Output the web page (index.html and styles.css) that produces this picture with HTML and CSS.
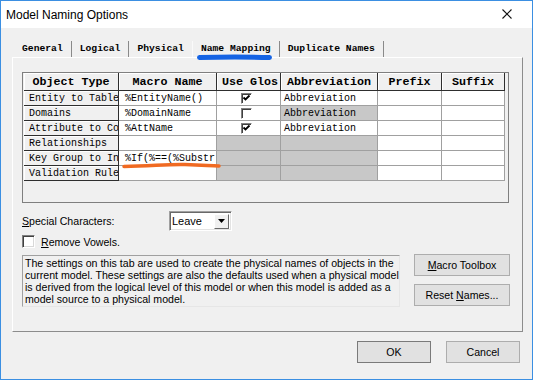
FILE: index.html
```html
<!DOCTYPE html>
<html lang="en">
<head>
    <meta charset="UTF-8">
    <meta name="viewport" content="width=device-width, initial-scale=1.0">
    <title>Model Naming Options</title>
    <link rel="stylesheet" href="styles.css">
</head>
<body>
    <div class="window">
        <div class="titlebar">
            <span class="title">Model Naming Options</span>
            <svg class="close" width="10" height="10" viewBox="0 0 10 10">
                <path d="M0.5 0.5L9.5 9.5M9.5 0.5L0.5 9.5" stroke="#111" stroke-width="1.1" fill="none"/>
            </svg>
        </div>

        <div class="client">
            <div class="tabs">
                <div class="tab">General</div>
                <div class="tab">Logical</div>
                <div class="tab prev">Physical</div>
                <div class="tab active">Name Mapping</div>
                <div class="tab">Duplicate Names</div>
            </div>

            <div class="panel">
                <div class="grid-frame">
                    <table class="grid">
                        <colgroup>
                            <col class="c-type">
                            <col class="c-macro">
                            <col class="c-glos">
                            <col class="c-abbr">
                            <col class="c-prefix">
                            <col class="c-suffix">
                        </colgroup>
                        <tr class="head">
                            <th>Object Type</th>
                            <th>Macro Name</th>
                            <th class="left">Use Glos</th>
                            <th>Abbreviation</th>
                            <th>Prefix</th>
                            <th>Suffix</th>
                        </tr>
                        <tr>
                            <th>Entity to Table</th>
                            <td class="macro">%EntityName()</td>
                            <td class="glos"><span class="cb"><svg width="9" height="9" viewBox="0 0 9 9"><polyline points="1.5,3.5 3.5,5.5 7.5,1.5" fill="none" stroke="#000" stroke-width="1.8"/></svg></span></td>
                            <td class="abbr">Abbreviation</td>
                            <td></td>
                            <td></td>
                        </tr>
                        <tr>
                            <th>Domains</th>
                            <td class="macro">%DomainName</td>
                            <td class="glos"><span class="cb"></span></td>
                            <td class="abbr off">Abbreviation</td>
                            <td></td>
                            <td></td>
                        </tr>
                        <tr>
                            <th>Attribute to Co</th>
                            <td class="macro">%AttName</td>
                            <td class="glos"><span class="cb"><svg width="9" height="9" viewBox="0 0 9 9"><polyline points="1.5,3.5 3.5,5.5 7.5,1.5" fill="none" stroke="#000" stroke-width="1.8"/></svg></span></td>
                            <td class="abbr">Abbreviation</td>
                            <td></td>
                            <td></td>
                        </tr>
                        <tr>
                            <th>Relationships</th>
                            <td class="macro"></td>
                            <td class="off"></td>
                            <td class="off"></td>
                            <td></td>
                            <td></td>
                        </tr>
                        <tr>
                            <th>Key Group to In</th>
                            <td class="macro">%If(%==(%Substr</td>
                            <td class="off"></td>
                            <td class="off"></td>
                            <td></td>
                            <td></td>
                        </tr>
                        <tr>
                            <th>Validation Rule</th>
                            <td class="macro"></td>
                            <td class="off"></td>
                            <td class="off"></td>
                            <td></td>
                            <td></td>
                        </tr>
                    </table>
                </div>

                <div class="special">
                    <label><u>S</u>pecial Characters:</label>
                    <div class="combo">
                        <span>Leave</span>
                        <span class="drop"><svg width="7" height="4" viewBox="0 0 7 4"><polygon points="0,0 7,0 3.5,4" fill="#000"/></svg></span>
                    </div>
                </div>

                <div class="vowels">
                    <span class="box"></span>
                    <span><u>R</u>emove Vowels.</span>
                </div>

                <div class="lower">
                    <div class="desc">
                        The settings on this tab are used to create the physical names of objects in the<br>
                        current model. These settings are also the defaults used when a physical model<br>
                        is derived from the logical level of this model or when this model is added as a<br>
                        model source to a physical model.
                    </div>
                    <div class="side">
                        <button class="btn"><u>M</u>acro Toolbox</button>
                        <button class="btn">Reset <u>N</u>ames...</button>
                    </div>
                </div>
            </div>

            <div class="footer">
                <button class="btn ok">OK</button>
                <button class="btn">Cancel</button>
            </div>
        </div>

        <!-- hand-drawn highlight strokes over the screenshot -->
        <svg class="marks" width="533" height="380" viewBox="0 0 533 380">
            <path d="M199.5 57.5 Q235 56.5 269.5 57.5" stroke="#1463e4" stroke-width="5" stroke-linecap="round" fill="none"/>
            <path d="M124 166.5 C150 166.5 165 164 185 164.5 S210 166 219 166" stroke="#f06a22" stroke-width="3.5" stroke-linecap="round" fill="none"/>
        </svg>
    </div>
</body>
</html>
```

FILE: styles.css
```css
body {
    margin: 0;
    background: #fff;
    font-family: "Liberation Sans", Arial, sans-serif;
    font-size: 10.6px;
    color: #000;
}

.window {
    position: relative;
    width: 533px;
    height: 380px;
    box-sizing: border-box;
    border: 1px solid #3b8fe2;
    background: #f0f0f0;
}

.titlebar {
    height: 27px;
    background: #fff;
    display: flex;
    align-items: center;
    justify-content: space-between;
    padding: 0 20px 0 5px;
}

.title {
    font-size: 12px;
}

.close {
    margin-top: -1px;
}

.client {
    padding-left: 11px;
}

.tabs {
    display: flex;
    height: 16px;
    margin: 13px 0 0 2px;
    font-family: "Liberation Mono", monospace;
    font-size: 9.7px;
    font-weight: bold;
}

.tab {
    padding: 0 8px;
    line-height: 16px;
    border-right: 1px solid #8a8a8a;
}

.tab.prev {
    border-right-color: #fafafa;
}

.panel {
    width: 511px;
    height: 275px;
    box-sizing: border-box;
    border: 1px solid;
    border-color: #fff #8c8c8c #8c8c8c #fff;
    padding: 14px 0 0 9px;
}

.grid-frame {
    width: 487px;
    height: 131px;
    box-sizing: border-box;
    border: 1px solid #7f7f7f;
    padding-left: 1px;
}

.grid {
    border-collapse: separate;
    border-spacing: 0;
    table-layout: fixed;
    width: 481px;
    font-family: "Liberation Mono", monospace;
    font-size: 10px;
}

.c-type { width: 95px; }
.c-macro { width: 98px; }
.c-glos { width: 64px; }
.c-abbr { width: 97px; }
.c-prefix { width: 64px; }
.c-suffix { width: 63px; }

.grid tr {
    height: 15px;
}

.grid tr.head {
    height: 18px;
}

.grid th,
.grid td {
    padding: 0;
    white-space: nowrap;
    overflow: hidden;
    vertical-align: middle;
}

.grid th {
    background: #f0f0f0;
    border-right: 1px solid #2e2e2e;
    border-bottom: 1px solid #2e2e2e;
    box-shadow: inset 1px 1px 0 #fff;
    font-weight: normal;
    text-align: left;
    padding-left: 5px;
}

.grid .head th {
    font-size: 11.7px;
    font-weight: bold;
    text-align: center;
    padding: 0 3px;
}

.grid .head th.left {
    text-align: left;
    padding-left: 5px;
}

.grid td {
    background: #fff;
    border-right: 1px solid #a0a0a0;
    border-bottom: 1px solid #a0a0a0;
}

.grid td.macro {
    padding-left: 6px;
}

.grid td.abbr {
    padding-left: 3px;
}

.grid td.glos {
    padding-left: 24px;
}

.grid td.off {
    background: #c8c8c8;
}

.cb {
    display: block;
    width: 11px;
    height: 11px;
    box-sizing: border-box;
    border: 1px solid;
    border-color: #808080 #fff #fff #808080;
    box-shadow: inset 1px 1px 0 #404040;
    background: #fff;
}

.cb svg {
    display: block;
}

.special {
    display: flex;
    align-items: center;
    height: 20px;
    margin-top: 8px;
}

.special label {
    width: 147px;
}

.combo {
    width: 63px;
    height: 20px;
    box-sizing: border-box;
    border: 1px solid;
    border-color: #a0a0a0 #fff #fff #a0a0a0;
    box-shadow: inset 1px 1px 0 #696969, inset -1px -1px 0 #e3e3e3;
    background: #fff;
    display: flex;
    align-items: center;
    justify-content: space-between;
    padding: 0 2px;
    font-size: 11px;
}

.drop {
    width: 15px;
    height: 15px;
    box-sizing: border-box;
    background: #f0f0f0;
    border: 1px solid;
    border-color: #fff #696969 #696969 #fff;
    display: flex;
    align-items: center;
    justify-content: center;
}

.vowels {
    display: flex;
    align-items: center;
    gap: 6px;
    height: 13px;
    margin-top: 4px;
}

.box {
    width: 13px;
    height: 13px;
    box-sizing: border-box;
    border: 1px solid;
    border-color: #808080 #fff #fff #808080;
    box-shadow: inset 1px 1px 0 #404040, inset -1px -1px 0 #d8d8d8;
    background: #fff;
}

.lower {
    display: flex;
    align-items: flex-start;
    margin-top: 7px;
}

.desc {
    width: 378px;
    height: 52px;
    box-sizing: border-box;
    border: 1px solid;
    border-color: #a0a0a0 #e6e6e6 #e6e6e6 #a0a0a0;
    padding: 1px 2px;
    line-height: 12px;
    white-space: nowrap;
    overflow: hidden;
}

.side {
    display: flex;
    flex-direction: column;
    gap: 8px;
    margin: -1px 0 0 14px;
}

.btn {
    width: 96px;
    height: 22px;
    box-sizing: border-box;
    background: #e1e1e1;
    border: 1px solid #adadad;
    font-family: "Liberation Sans", Arial, sans-serif;
    font-size: 10.6px;
    color: #000;
    padding: 0;
}

.footer {
    display: flex;
    justify-content: flex-end;
    gap: 15px;
    margin-top: 9px;
    padding-right: 12px;
}

.footer .btn {
    width: 74px;
}

.btn.ok {
    border-color: #7a7a7a;
}

.marks {
    position: absolute;
    left: -1px;
    top: -1px;
    pointer-events: none;
}
```
